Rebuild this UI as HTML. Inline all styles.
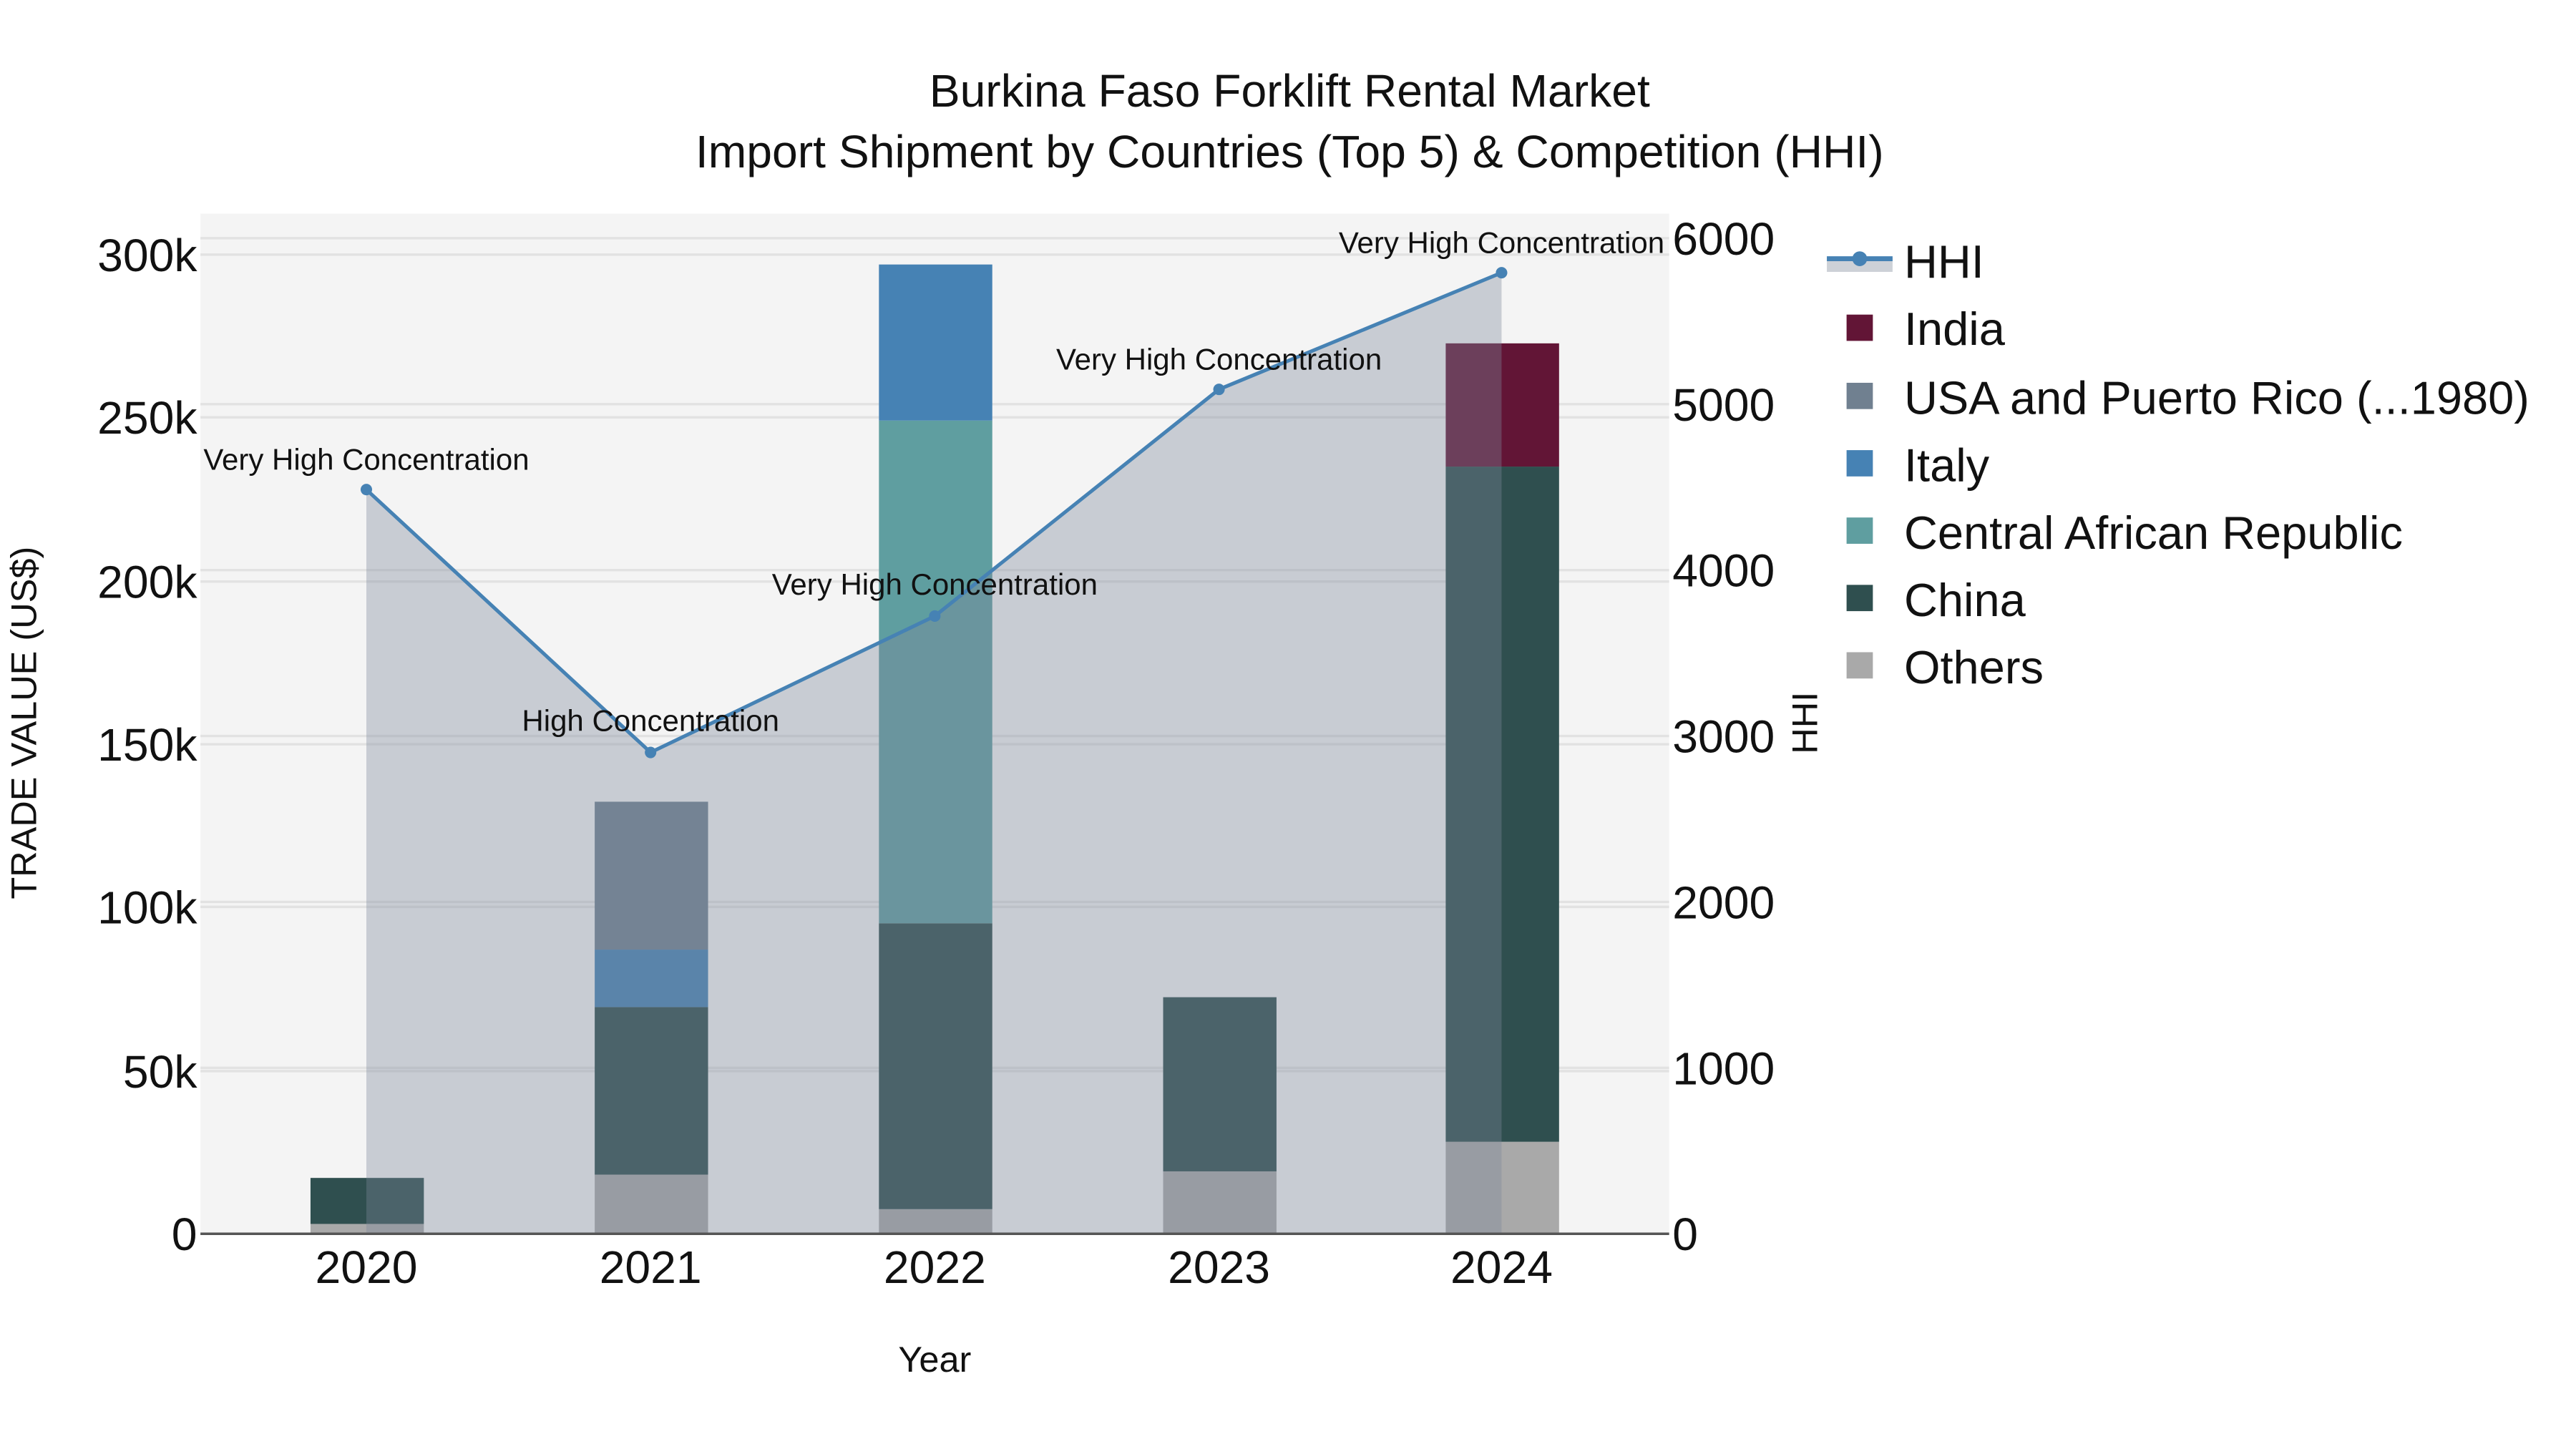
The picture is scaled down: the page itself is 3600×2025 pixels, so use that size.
<!DOCTYPE html>
<html><head><meta charset="utf-8"><style>html,body{margin:0;padding:0;background:#fff}svg{display:block}</style></head>
<body>
<svg width="3600" height="2025" viewBox="0 0 1568 882" xmlns="http://www.w3.org/2000/svg" font-family="Liberation Sans, Arial, sans-serif">
<rect x="0" y="0" width="1568" height="882" fill="#fff"/>
<rect x="122" y="130" width="894" height="621" fill="#f4f4f4"/>
<g stroke="#e2e2e2" stroke-width="1.5">
<line x1="122" x2="1016" y1="652" y2="652"/><line x1="122" x2="1016" y1="552" y2="552"/><line x1="122" x2="1016" y1="453" y2="453"/><line x1="122" x2="1016" y1="354" y2="354"/><line x1="122" x2="1016" y1="254" y2="254"/><line x1="122" x2="1016" y1="155" y2="155"/>
<line x1="122" x2="1016" y1="650" y2="650"/><line x1="122" x2="1016" y1="549" y2="549"/><line x1="122" x2="1016" y1="448" y2="448"/><line x1="122" x2="1016" y1="347" y2="347"/><line x1="122" x2="1016" y1="246" y2="246"/><line x1="122" x2="1016" y1="145" y2="145"/>
</g>
<g>
<rect x="189" y="745" width="69" height="6" fill="#a9a9a9"/>
<rect x="189" y="717" width="69" height="28" fill="#2f4f4f"/>
<rect x="362" y="715" width="69" height="36" fill="#a9a9a9"/>
<rect x="362" y="613" width="69" height="102" fill="#2f4f4f"/>
<rect x="362" y="578" width="69" height="35" fill="#4682b4"/>
<rect x="362" y="488" width="69" height="90" fill="#708090"/>
<rect x="535" y="736" width="69" height="15" fill="#a9a9a9"/>
<rect x="535" y="562" width="69" height="174" fill="#2f4f4f"/>
<rect x="535" y="256" width="69" height="306" fill="#5f9ea0"/>
<rect x="535" y="161" width="69" height="95" fill="#4682b4"/>
<rect x="708" y="713" width="69" height="38" fill="#a9a9a9"/>
<rect x="708" y="607" width="69" height="106" fill="#2f4f4f"/>
<rect x="880" y="695" width="69" height="56" fill="#a9a9a9"/>
<rect x="880" y="284" width="69" height="411" fill="#2f4f4f"/>
<rect x="880" y="209" width="69" height="75" fill="#621536"/>
</g>
<polygon points="223,298 396,458 569,375 742,237 914,166 914,751 223,751" fill="rgb(124,135,154)" fill-opacity="0.37"/>
<polyline points="223,298 396,458 569,375 742,237 914,166" fill="none" stroke="#4682b4" stroke-width="2.2"/>
<g fill="#4682b4"><circle cx="223" cy="298" r="3.5"/><circle cx="396" cy="458" r="3.5"/><circle cx="569" cy="375" r="3.5"/><circle cx="742" cy="237" r="3.5"/><circle cx="914" cy="166" r="3.5"/></g>
<line x1="122" x2="1016" y1="751" y2="751" stroke="#555" stroke-width="1.5"/>
<g font-size="18.3" text-anchor="middle" fill="#111">
<text x="223" y="286">Very High Concentration</text>
<text x="396" y="445">High Concentration</text>
<text x="569" y="362">Very High Concentration</text>
<text x="742" y="225">Very High Concentration</text>
<text x="914" y="154">Very High Concentration</text>
</g>
<g font-size="28" text-anchor="middle" fill="#111">
<text x="785" y="65">Burkina Faso Forklift Rental Market</text>
<text x="785" y="102">Import Shipment by Countries (Top 5) &amp; Competition (HHI)</text>
</g>
<g font-size="28" text-anchor="end" fill="#111">
<text x="120" y="761">0</text><text x="120" y="662">50k</text><text x="120" y="562">100k</text><text x="120" y="463">150k</text><text x="120" y="364">200k</text><text x="120" y="264">250k</text><text x="120" y="165">300k</text>
</g>
<g font-size="28" fill="#111">
<text x="1018" y="761">0</text><text x="1018" y="660">1000</text><text x="1018" y="559">2000</text><text x="1018" y="458">3000</text><text x="1018" y="357">4000</text><text x="1018" y="256">5000</text><text x="1018" y="155">6000</text>
</g>
<g font-size="28" text-anchor="middle" fill="#111">
<text x="223" y="781">2020</text><text x="396" y="781">2021</text><text x="569" y="781">2022</text><text x="742" y="781">2023</text><text x="914" y="781">2024</text>
</g>
<text x="569" y="835" font-size="22" text-anchor="middle" fill="#111">Year</text>
<text transform="translate(22,440) rotate(-90)" font-size="22" text-anchor="middle" fill="#111">TRADE VALUE (US$)</text>
<text transform="translate(1106,440) rotate(-90)" font-size="22" text-anchor="middle" fill="#111">HHI</text>
<rect x="1112" y="157" width="40" height="8.5" fill="#cdd1d7"/>
<line x1="1112" x2="1152" y1="157.5" y2="157.5" stroke="#4682b4" stroke-width="3"/>
<circle cx="1132" cy="157.5" r="4.5" fill="#4682b4"/>
<g font-size="28.3" fill="#111">
<text x="1159" y="169">HHI</text>
<text x="1159" y="210">India</text>
<text x="1159" y="252">USA and Puerto Rico (...1980)</text>
<text x="1159" y="293">Italy</text>
<text x="1159" y="334">Central African Republic</text>
<text x="1159" y="375">China</text>
<text x="1159" y="416">Others</text>
</g>
<rect x="1124" y="191.5" width="16" height="16" fill="#621536"/>
<rect x="1124" y="233" width="16" height="16" fill="#708090"/>
<rect x="1124" y="274" width="16" height="16" fill="#4682b4"/>
<rect x="1124" y="315" width="16" height="16" fill="#5f9ea0"/>
<rect x="1124" y="356" width="16" height="16" fill="#2f4f4f"/>
<rect x="1124" y="397" width="16" height="16" fill="#a9a9a9"/>
</svg>
</body></html>
